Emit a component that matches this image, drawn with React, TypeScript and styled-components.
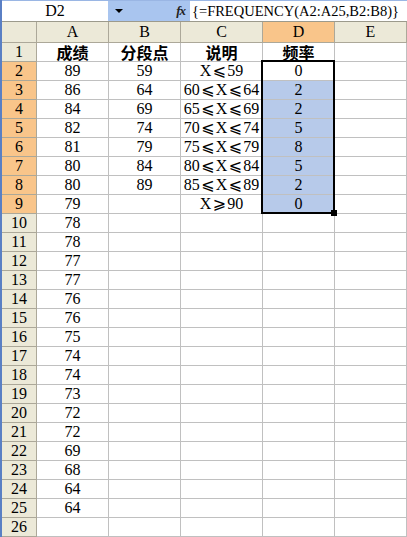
import styled, { createGlobalStyle } from 'styled-components';

const GlobalStyle = createGlobalStyle`
  html, body {
    margin: 0;
    padding: 0;
    background: #ffffff;
    overflow: hidden;
  }
`;

const latin = `'Liberation Serif', 'Noto Sans CJK SC', serif`;
const cjk = `'Noto Sans CJK SC', 'Liberation Sans', sans-serif`;

const colWidths = [35, 72, 72, 82, 72, 72];
const colNames = ['A', 'B', 'C', 'D', 'E'];

const scores = [89, 86, 84, 82, 81, 80, 80, 79, 78, 78, 77, 77, 76, 76, 75, 74, 74, 73, 72, 72, 69, 68, 64, 64];
const cuts = [59, 64, 69, 74, 79, 84, 89];
const bands: [string, string, string][] = [
  ['', 'X', '⩽59'],
  ['60', '⩽X', '⩽64'],
  ['65', '⩽X', '⩽69'],
  ['70', '⩽X', '⩽74'],
  ['75', '⩽X', '⩽79'],
  ['80', '⩽X', '⩽84'],
  ['85', '⩽X', '⩽89'],
  ['', 'X', '⩾90'],
];
const freq = [0, 2, 2, 5, 8, 5, 2, 0];

const Page = styled.div`
  width: 405px;
  height: 537px;
  border-left: 2px solid #5a7fc4;
  overflow: hidden;
`;

const FormulaBar = styled.div`
  display: flex;
  height: 22px;
  box-sizing: border-box;
  border-top: 1px solid #9ab6e4;
  border-bottom: 1px solid #9c9a8c;
`;

const NameBox = styled.div`
  width: 106px;
  display: flex;
  align-items: center;
  justify-content: center;
  background: #ffffff;
  font-family: ${latin};
  font-size: 16px;
  color: #000;
`;

const ToolStrip = styled.div`
  width: 82px;
  display: flex;
  align-items: center;
  justify-content: space-between;
  padding: 0 5px 0 7px;
  box-sizing: border-box;
  background: #a9c5ef;
`;

const DropArrow = styled.span`
  width: 0;
  height: 0;
  border-left: 4px solid transparent;
  border-right: 4px solid transparent;
  border-top: 4px solid #000;
`;

const FxLabel = styled.span`
  font-family: 'Liberation Serif', serif;
  font-style: italic;
  font-weight: bold;
  font-size: 13px;
  letter-spacing: -1px;
  color: #222;
`;

const FormulaText = styled.div`
  flex: 1;
  display: flex;
  align-items: center;
  padding-left: 2px;
  background: #ffffff;
  font-family: ${latin};
  font-size: 14.5px;
  color: #000;
  white-space: nowrap;
`;

const SheetWrap = styled.div`
  position: relative;
`;

const Grid = styled.div`
  display: grid;
  grid-template-columns: ${colWidths.map(w => `${w}px`).join(' ')};
  grid-template-rows: 21px;
  grid-auto-rows: 19px;
`;

const HeaderCell = styled.div<{ $hot?: boolean }>`
  box-sizing: border-box;
  display: flex;
  align-items: center;
  justify-content: center;
  background: ${p => (p.$hot ? '#f9c58a' : '#ece9d8')};
  border-right: 1px solid #aca899;
  border-bottom: 1px solid #aca899;
  font-family: ${latin};
  font-size: 16px;
  line-height: 18px;
  color: #000;
`;

const Cell = styled.div<{ $fill?: boolean; $bold?: boolean }>`
  box-sizing: border-box;
  display: flex;
  align-items: center;
  justify-content: center;
  background: ${p => (p.$fill ? '#b7caea' : '#ffffff')};
  border-right: 1px solid #c0c0c0;
  border-bottom: 1px solid #c0c0c0;
  font-family: ${p => (p.$bold ? cjk : latin)};
  font-weight: ${p => (p.$bold ? 700 : 400)};
  font-size: 16px;
  line-height: 18px;
  color: #000;
  white-space: nowrap;
`;

const Rel = styled.span`
  display: inline-block;
  width: 16px;
  text-align: center;
  font-family: 'DejaVu Sans', 'Noto Sans CJK SC', sans-serif;
  font-size: 16px;
  line-height: 18px;
`;

const Selection = styled.div`
  position: absolute;
  left: 259px;
  top: 38px;
  width: 74px;
  height: 154px;
  box-sizing: border-box;
  border: 2px solid #000;
  pointer-events: none;
`;

const FillHandle = styled.div`
  position: absolute;
  right: -4px;
  bottom: -4px;
  width: 6px;
  height: 6px;
  background: #000;
`;

function Band({ parts }: { parts: [string, string, string] }) {
  const [lead, mid, tail] = parts;
  const relMid = mid.length > 1;
  return (
    <span>
      {lead}
      {relMid ? (
        <>
          <Rel>{mid[0]}</Rel>
          {mid.slice(1)}
        </>
      ) : (
        mid
      )}
      <Rel>{tail[0]}</Rel>
      {tail.slice(1)}
    </span>
  );
}

export default function App() {
  const rows = Array.from({ length: 26 }, (_, i) => i + 1);
  return (
    <Page>
      <GlobalStyle />
      <FormulaBar>
        <NameBox>D2</NameBox>
        <ToolStrip>
          <DropArrow />
          <FxLabel>fx</FxLabel>
        </ToolStrip>
        <FormulaText>{'{=FREQUENCY(A2:A25,B2:B8)}'}</FormulaText>
      </FormulaBar>
      <SheetWrap>
        <Grid>
          <HeaderCell />
          {colNames.map(c => (
            <HeaderCell key={c} $hot={c === 'D'}>
              {c}
            </HeaderCell>
          ))}
          {rows.map(r => {
            const di = r - 2;
            const inSel = di >= 0 && di < freq.length;
            return [
              <HeaderCell key={`h${r}`} $hot={inSel}>
                {r}
              </HeaderCell>,
              <Cell key={`a${r}`} $bold={r === 1}>
                {r === 1 ? '成绩' : scores[di] ?? ''}
              </Cell>,
              <Cell key={`b${r}`} $bold={r === 1}>
                {r === 1 ? '分段点' : cuts[di] ?? ''}
              </Cell>,
              <Cell key={`c${r}`} $bold={r === 1}>
                {r === 1 ? '说明' : bands[di] ? <Band parts={bands[di]} /> : ''}
              </Cell>,
              <Cell key={`d${r}`} $bold={r === 1} $fill={inSel && di > 0}>
                {r === 1 ? '频率' : inSel ? freq[di] : ''}
              </Cell>,
              <Cell key={`e${r}`} />,
            ];
          })}
        </Grid>
        <Selection>
          <FillHandle />
        </Selection>
      </SheetWrap>
    </Page>
  );
}
